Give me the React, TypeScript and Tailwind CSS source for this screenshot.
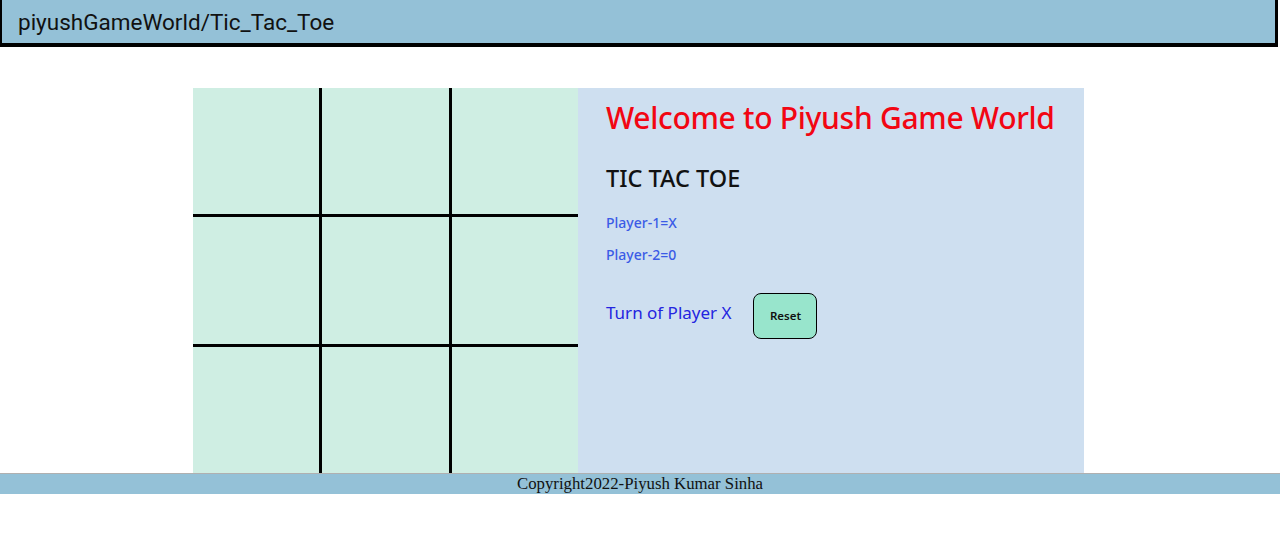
export default function App() {
  const cells = Array.from({ length: 9 });

  return (
    <div className="min-h-[555px] bg-white">
      <header className="h-[47px] w-[1278px] bg-[#94c1d7] border-l-2 border-r-[3px] border-b-4 border-black pl-4 flex items-center">
        <span className="text-[22.5px] text-[#111] font-['Roboto',sans-serif] leading-[28px]">
          piyushGameWorld/Tic_Tac_Toe
        </span>
      </header>

      <main className="mt-[41px] ml-[193px] flex h-[385px]">
        <div className="grid grid-cols-3 grid-rows-3 gap-[3px] bg-black w-[385px] h-[385px]">
          {cells.map((_, i) => (
            <div key={i} className="bg-[#cfeee3]" />
          ))}
        </div>
        <section className="w-[506px] bg-[#cedff0] pl-7 pt-[10px] font-['Noto_Sans',sans-serif]">
          <h1 className="text-[30px] font-medium text-[#f20613] leading-[40px] tracking-[-0.3px]">
            Welcome to Piyush Game World
          </h1>
          <h2 className="mt-[24px] text-[23.5px] font-medium text-[#111] leading-[32px]">
            TIC TAC TOE
          </h2>
          <p className="mt-[19px] text-[14px] font-medium text-[#3b5be6] leading-[20px]">Player-1=X</p>
          <p className="mt-[12px] text-[14px] font-medium text-[#3b5be6] leading-[20px]">Player-2=0</p>
          <div className="mt-[28px] flex items-start">
            <span className="mt-[8px] text-[17px] leading-[24px] text-[#2424e0]">Turn of Player X</span>
            <button className="ml-[22px] w-[64px] h-[46px] rounded-lg border border-black bg-[#98e5cc] text-[11.5px] font-semibold text-[#111]">
              Reset
            </button>
          </div>
        </section>
      </main>

      <footer className="border-t border-[#b0b0b0] bg-[#94c1d7] h-[21px] flex justify-center">
        <span className="font-['Liberation_Serif',serif] text-[16.8px] leading-[20px] text-[#111]">
          Copyright2022-Piyush Kumar Sinha
        </span>
      </footer>
    </div>
  );
}
